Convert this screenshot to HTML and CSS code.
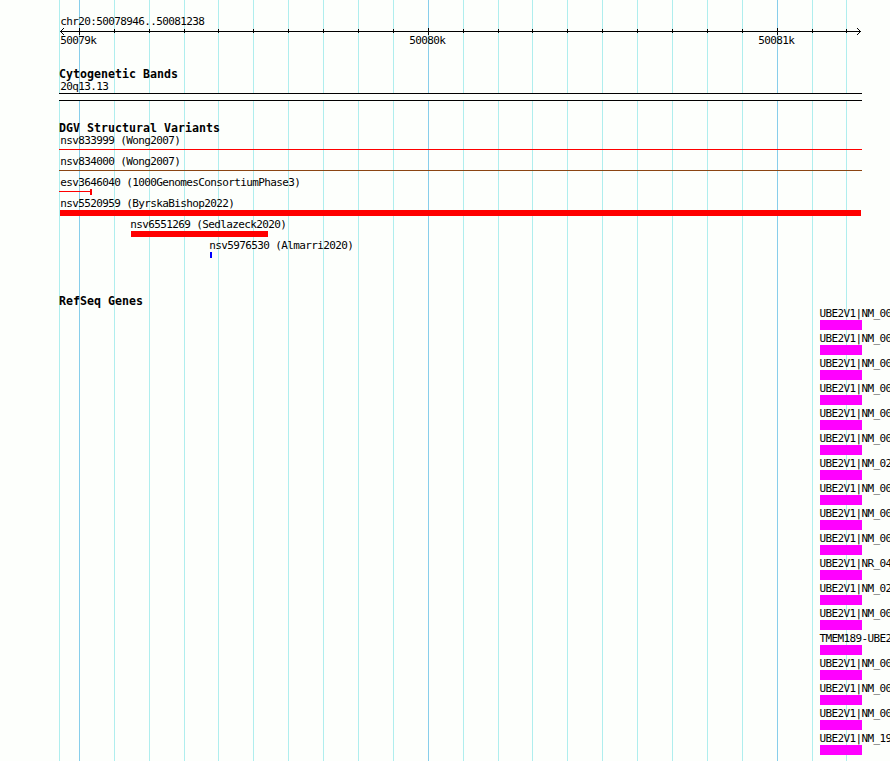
FILE: index.html
```
<!DOCTYPE html>
<html lang="en">
<head>
<meta charset="utf-8">
<title>chr20:50078946..50081238</title>
<link rel="stylesheet" href="styles.css">
</head>
<body>
<main class="browser">
  <svg class="grid" width="890" height="761" shape-rendering="crispEdges" aria-hidden="true">
    <path class="minor" d="M59.5 0V761M114.5 0V761M149.5 0V761M184.5 0V761M218.5 0V761M253.5 0V761M288.5 0V761M323.5 0V761M358.5 0V761M393.5 0V761M463.5 0V761M498.5 0V761M532.5 0V761M567.5 0V761M602.5 0V761M637.5 0V761M672.5 0V761M707.5 0V761M742.5 0V761M812.5 0V761M846.5 0V761"/>
    <path class="major" d="M79.5 0V761M428.5 0V761M777.5 0V761"/>
  </svg>
  <header class="ruler">
    <div class="label">chr20:50078946..50081238</div>
    <svg class="axis" width="804" height="7" viewBox="59 28 804 7" shape-rendering="crispEdges">
      <path d="M60 31.5H861M79.5 28V35M428.5 28V35M777.5 28V35M114.5 29V33M149.5 29V33M184.5 29V33M218.5 29V33M253.5 29V33M288.5 29V33M323.5 29V33M358.5 29V33M393.5 29V33M463.5 29V33M498.5 29V33M532.5 29V33M567.5 29V33M602.5 29V33M637.5 29V33M672.5 29V33M707.5 29V33M742.5 29V33M812.5 29V33M846.5 29V33"/>
      <path d="M61 30.5h1M62 29.5h1M63 28.5h1M61 32.5h1M62 33.5h1M63 34.5h1M859 30.5h1M858 29.5h1M857 28.5h1M859 32.5h1M858 33.5h1M857 34.5h1"/>
    </svg>
    <div class="ticks"><span class="label">50079k</span><span class="label">50080k</span><span class="label">50081k</span></div>
  </header>
  <section class="track bands">
    <h2>Cytogenetic Bands</h2>
    <div class="label">20q13.13</div>
    <div class="band"></div>
  </section>
  <section class="track variants">
    <h2>DGV Structural Variants</h2>
    <div class="variant"><div class="label">nsv833999 (Wong2007)</div><div class="line red"></div></div>
    <div class="variant"><div class="label">nsv834000 (Wong2007)</div><div class="line brown"></div></div>
    <div class="variant"><div class="label">esv3646040 (1000GenomesConsortiumPhase3)</div><div class="partial"><i class="line red"></i><i class="cap"></i></div></div>
    <div class="variant"><div class="label">nsv5520959 (ByrskaBishop2022)</div><div class="bar full"></div></div>
    <div class="variant sedlazeck"><div class="label">nsv6551269 (Sedlazeck2020)</div><div class="bar"></div></div>
    <div class="variant almarri"><div class="label">nsv5976530 (Almarri2020)</div><div class="bar"></div></div>
  </section>
  <section class="track genes">
    <h2>RefSeq Genes</h2>
    <div class="gene"><div class="label">UBE2V1|NM_00</div><div class="exon"></div></div>
    <div class="gene"><div class="label">UBE2V1|NM_00</div><div class="exon"></div></div>
    <div class="gene"><div class="label">UBE2V1|NM_00</div><div class="exon"></div></div>
    <div class="gene"><div class="label">UBE2V1|NM_00</div><div class="exon"></div></div>
    <div class="gene"><div class="label">UBE2V1|NM_00</div><div class="exon"></div></div>
    <div class="gene"><div class="label">UBE2V1|NM_00</div><div class="exon"></div></div>
    <div class="gene"><div class="label">UBE2V1|NM_02</div><div class="exon"></div></div>
    <div class="gene"><div class="label">UBE2V1|NM_00</div><div class="exon"></div></div>
    <div class="gene"><div class="label">UBE2V1|NM_00</div><div class="exon"></div></div>
    <div class="gene"><div class="label">UBE2V1|NM_00</div><div class="exon"></div></div>
    <div class="gene"><div class="label">UBE2V1|NR_04</div><div class="exon"></div></div>
    <div class="gene"><div class="label">UBE2V1|NM_02</div><div class="exon"></div></div>
    <div class="gene"><div class="label">UBE2V1|NM_00</div><div class="exon"></div></div>
    <div class="gene"><div class="label">TMEM189-UBE2</div><div class="exon"></div></div>
    <div class="gene"><div class="label">UBE2V1|NM_00</div><div class="exon"></div></div>
    <div class="gene"><div class="label">UBE2V1|NM_00</div><div class="exon"></div></div>
    <div class="gene"><div class="label">UBE2V1|NM_00</div><div class="exon"></div></div>
    <div class="gene"><div class="label">UBE2V1|NM_19</div><div class="exon"></div></div>
  </section>
</main>
</body>
</html>
```
FILE: styles.css
```
body {
  margin: 0;
  background: #fdfffc;
  color: #000;
  font: 11px/13px "DejaVu Sans Mono", "Liberation Mono", monospace;
}

.browser {
  position: relative;
  box-sizing: border-box;
  width: 890px;
  height: 761px;
  padding: 15px 0 0 59px;
  overflow: hidden;
}

/* Grid lines run behind every track */
.grid {
  position: absolute;
  inset: 0;
  z-index: -1;
}
.grid path, .axis path { fill: none; stroke-width: 1; }
.minor { stroke: #afeeee; }
.major { stroke: #87ceeb; }
.axis path { stroke: #000; }

.label {
  height: 13px;
  padding-left: 1.3px;
  letter-spacing: -0.622px;
  white-space: pre;
}

h2 {
  margin: 0;
  height: 12px;
  font-size: 11.6px;
  font-weight: bold;
  line-height: 13px;
  letter-spacing: 0.016px;
  white-space: pre;
}

.ruler { height: 53px; }
.axis { display: block; }
.ticks {
  display: grid;
  grid-template-columns: 349px 349px auto;
  margin-top: -1px;
}

.bands { height: 54px; }
.band {
  box-sizing: border-box;
  width: 803px;
  height: 8px;
  border: solid #000;
  border-width: 1px 0;
  background: #fdfffc;
}

.variants { height: 173px; }
.variant { height: 21px; }
.line {
  width: 803px;
  height: 1px;
  margin-top: 2px;
}
.red { background: #f00; }
.brown { background: #8b4513; }
.partial {
  display: flex;
  align-items: flex-start;
  height: 6px;
}
.partial .line {
  width: 31px;
  margin: 2px 0 0;
}
.cap {
  width: 2px;
  height: 6px;
  background: #f00;
}
.bar {
  height: 6px;
  margin-left: 1px;
  background: #f00;
}
.full { width: 801px; }
.sedlazeck { margin-left: 70px; }
.sedlazeck .bar { width: 137px; margin-left: 2px; }
.almarri { margin-left: 149px; }
.almarri .bar { width: 2px; margin-left: 2px; background: #00f; }

.gene {
  width: 130px;
  height: 25px;
  margin-left: 760px;
}
.gene .label { padding-left: 0.5px; }
.exon {
  width: 42px;
  height: 10px;
  margin-left: 1px;
  background: #f0f;
}
```
